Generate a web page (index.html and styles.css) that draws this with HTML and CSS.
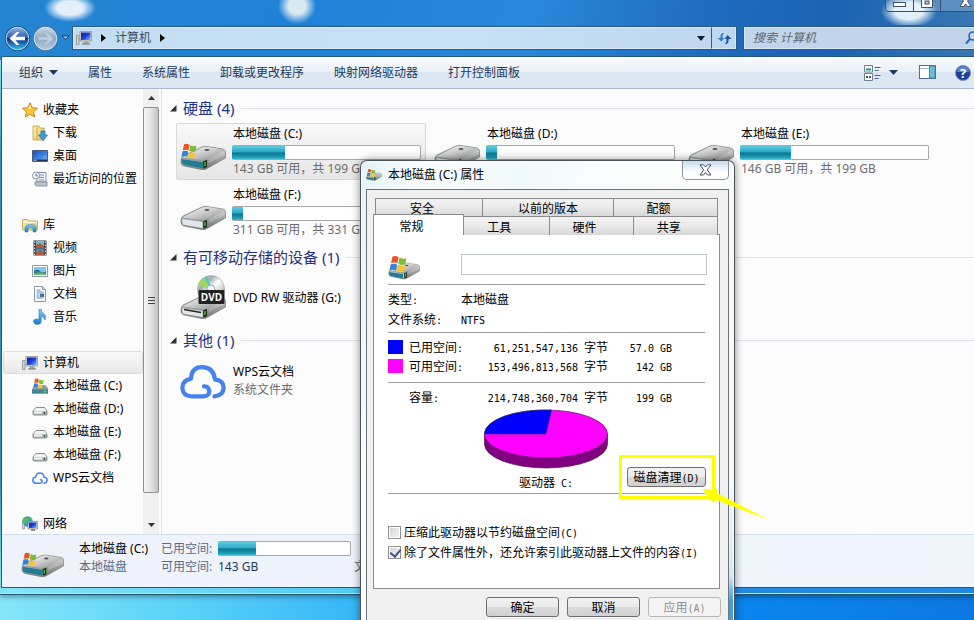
FILE: index.html
```html
<!DOCTYPE html>
<html lang="zh-CN">
<head>
<meta charset="utf-8">
<title>计算机</title>
<link rel="stylesheet" href="styles.css">
</head>
<body>
<svg class="defs" aria-hidden="true">
  <defs>
    <linearGradient id="metal" x1="0" y1="0" x2="1" y2="1"><stop offset="0" stop-color="#fafafa"/><stop offset=".5" stop-color="#c9caca"/><stop offset="1" stop-color="#858786"/></linearGradient>
    <linearGradient id="side" x1="0" y1="0" x2="0" y2="1"><stop offset="0" stop-color="#d8dada"/><stop offset="1" stop-color="#6c706e"/></linearGradient>
    <linearGradient id="screen" x1="0" y1="0" x2="1" y2="1"><stop offset="0" stop-color="#0c1fa8"/><stop offset=".5" stop-color="#1d3fd6"/><stop offset="1" stop-color="#7fb4f5"/></linearGradient>
    <linearGradient id="wallpaper" x1="0" y1="0" x2="1" y2="1"><stop offset="0" stop-color="#1c49b8"/><stop offset=".6" stop-color="#3f86e6"/><stop offset="1" stop-color="#8cc4f5"/></linearGradient>
    <linearGradient id="folder" x1="0" y1="0" x2="1" y2="1"><stop offset="0" stop-color="#fdf3b4"/><stop offset="1" stop-color="#e3bd58"/></linearGradient>
    <linearGradient id="aqua" x1="0" y1="0" x2="0" y2="1"><stop offset="0" stop-color="#7fd0f7"/><stop offset="1" stop-color="#1878c4"/></linearGradient>
    <linearGradient id="orb" x1="0" y1="0" x2="0" y2="1"><stop offset="0" stop-color="#8fb4e4"/><stop offset=".45" stop-color="#2c5fb8"/><stop offset=".5" stop-color="#0a3288"/><stop offset="1" stop-color="#2fc0f4"/></linearGradient>
    <linearGradient id="orbOff" x1="0" y1="0" x2="0" y2="1"><stop offset="0" stop-color="#c8d6e4"/><stop offset=".5" stop-color="#8fa9c3"/><stop offset="1" stop-color="#b3cbdf"/></linearGradient>
    <linearGradient id="disc" x1="0" y1="0" x2="1" y2="1"><stop offset="0" stop-color="#efefef"/><stop offset=".3" stop-color="#a9acae"/><stop offset=".5" stop-color="#fff"/><stop offset="1" stop-color="#8b8e90"/></linearGradient>
  </defs>
  <symbol id="flag" viewBox="0 0 16 16">
    <path d="M3 1.500Q6 0 8.500 2L7.500 7.300Q5 6 1.800 7.300Z" fill="#e8542a"/><path d="M9.300 2.300Q12 4 15.500 2.800L14.500 8.200Q11.500 9.500 8.300 7.800Z" fill="#7fbd32"/>
    <path d="M1.500 8.300Q4.500 7 7.200 8.500L6.200 13.700Q3.500 12.500 .400 13.700Z" fill="#2f86dc"/><path d="M8 9Q11 10.600 14.300 9.300L13.200 14.700Q10 16 7 14.200Z" fill="#f8c52c"/>
  </symbol>
  <symbol id="drive" viewBox="0 0 46 26">
    <path d="M1 15Q1 12 4 10.500L22 2Q24 1 27 1.500L43 4Q46 5 45.500 8V13L27 23.500Q25 25 22 24.500L4 21Q1 20 1 17Z" fill="url(#side)" stroke="#777" stroke-width=".7"/>
    <path d="M2 12.500L23 2.500Q25 1.600 28 2L44 5L26 14.500Q24 15.500 21 15Z" fill="url(#metal)"/>
    <path d="M2 13.500L23 16.500V23.500L4 20.300Q2 19.800 2 18Z" fill="#e3e6ea" stroke="#8b8f93" stroke-width=".7"/>
    <path d="M23 16.500L27 14.800V22L23.500 23.500Z" fill="#1d2a1c"/><path d="M25 17v4" stroke="#61d43b" stroke-width="1.300"/><ellipse cx="27" cy="5" rx="2.500" ry="1" fill="#555"/>
    <path d="M29 15L45 6.500M29 17L45 9" stroke="#fff" stroke-width=".6" opacity=".6"/>
  </symbol>
  <symbol id="sysdrive" viewBox="0 0 46 28">
    <use href="#drive" x="0" y="2" width="46" height="26"/><path d="M2 16L23 19V25.500L4 22Q2 21 2 19Z" fill="#257b91"/><use href="#flag" x="1" y="0" width="16" height="16"/>
  </symbol>
  <symbol id="volume" viewBox="0 0 32 26">
    <use href="#drive" x="0" y="7" width="32" height="18"/><path d="M1 17L15 19V23.500L3 21Q1 20 1 19Z" fill="#257b91"/><use href="#flag" x="1" y="0" width="18" height="18"/>
  </symbol>
  <symbol id="minidrive" viewBox="0 0 16 16">
    <path d="M1 10L4 6.500H12.500L15 10V13Q15 14 14 14H2Q1 14 1 13Z" fill="#b9bcbd" stroke="#737878" stroke-width=".8"/><path d="M4 7H12.500L14.500 10H1.500Z" fill="#f1f2f2"/><path d="M2 11.500h8" stroke="#f5f5f5" stroke-width="2"/><path d="M12.500 11v2" stroke="#2c5f25" stroke-width="1.500"/>
  </symbol>
  <symbol id="minisys" viewBox="0 0 16 16">
    <path d="M0 11L3 7H13L16 10V15.500H0Z" fill="#8c9ca4"/><path d="M0 11.500h16v4H0z" fill="#3f8497"/><path d="M12 12.500h2v2h-2z" fill="#77c92e"/><use href="#flag" x="1" y="0" width="11" height="11"/>
  </symbol>
  <symbol id="computer" viewBox="0 0 16 16">
    <path d="M4 1.500H15.500V11H4Z" fill="#d9d9d2" stroke="#8e8e88" stroke-width=".7"/><path d="M5 2.500H14.500V10H5Z" fill="url(#screen)"/><path d="M8 11h4l1 3H7Z" fill="#a7a79f"/><path d="M6 14h8" stroke="#77776f"/><path d="M.500 5.500h2.500V14.500H.500Z" fill="#d6d8d6" stroke="#7b7d7b" stroke-width=".7"/>
  </symbol>
  <symbol id="star" viewBox="0 0 16 16"><path d="M8 .800L10.200 5.700L15.500 6.200L11.500 9.700L12.700 15L8 12.200L3.300 15L4.500 9.700L.500 6.200L5.800 5.700Z" fill="#fbc63c" stroke="#d97f1d"/><path d="M8 3L9.300 6.500H6Z" fill="#fff3b0"/></symbol>
  <symbol id="download" viewBox="0 0 16 16"><path d="M1 1H7L8 3H12V15H1Z" fill="url(#folder)" stroke="#bf9b45" stroke-width=".8"/><path d="M5 2V15" stroke="#cfa851"/><path d="M9 6h4v4h2.500L11 15.500L6.500 10H9Z" fill="#3a9be6" stroke="#1668b4" stroke-width=".7"/></symbol>
  <symbol id="desktop" viewBox="0 0 16 16"><path d="M.500 2.500H15.500V13.500H.500Z" fill="url(#wallpaper)" stroke="#4a5a78"/><path d="M1 11.500H15V13H1Z" fill="#253858"/><path d="M1.500 12.200h3" stroke="#9fd7f2"/></symbol>
  <symbol id="recent" viewBox="0 0 16 16"><path d="M5 1.500H14V11H5Z" fill="#eef3f8" stroke="#8191a4"/><path d="M7 4h5M7 6.500h5M7 9h5" stroke="#7292b5"/><path d="M3 11H15V15H5Q3 15 3 13Z" fill="#b9c4cf" stroke="#7a8796" stroke-width=".8"/><circle cx="4" cy="4.500" r="3.500" fill="#f7f9fa" stroke="#8c98a5"/><path d="M4 2.500V4.800H6" stroke="#54718f" fill="none"/></symbol>
  <symbol id="library" viewBox="0 0 16 16"><path d="M.500 2.500H6L7 4H15.500V13H.500Z" fill="url(#folder)" stroke="#c59f48" stroke-width=".8"/><path d="M1 5.500H15" stroke="#fffbd8"/><path d="M3 15V11Q3 7.500 8.500 7.500T14 11V15H11V12Q11 10.500 8.500 10.500T6 12V15Z" fill="url(#aqua)" stroke="#3a87c0" stroke-width=".6"/></symbol>
  <symbol id="video" viewBox="0 0 16 16"><path d="M1.500 .500H14.500V15.500H1.500Z" fill="#343a40"/><path d="M4 1H12V7.500H4Z" fill="#70b9db"/><path d="M4 8.500H12V15H4Z" fill="#4f91b6"/><path d="M4 5L8 3L12 6V7.500H4ZM4 13L8 10L12 13V15H4Z" fill="#b85a3a"/><path d="M2.700 1.500V15M13.300 1.500V15" stroke="#fff" stroke-dasharray="1.500 1.500"/></symbol>
  <symbol id="picture" viewBox="0 0 16 16"><path d="M.500 2.500H15.500V13.500H.500Z" fill="#fff" stroke="#8c9aa5"/><path d="M2 4H14V12H2Z" fill="#79c9ee"/><path d="M2 8Q5 5 8 8T14 8V12H2Z" fill="#257894"/><path d="M2 10.500Q8 8.500 14 11V12H2Z" fill="#70b669"/></symbol>
  <symbol id="document" viewBox="0 0 16 16"><path d="M2.500 .500H10.500L13.500 3.500V15.500H2.500Z" fill="#fff" stroke="#8996a5"/><path d="M10.500 .500V3.500H13.500" fill="#dbe5ee" stroke="#8996a5"/><path d="M4.500 4h4M4.500 6h7M4.500 8h3M4.500 10h3M4.500 12h7" stroke="#6387ab"/><path d="M8 7.500h4v3.500H8z" fill="#3976ae"/></symbol>
  <symbol id="music" viewBox="0 0 16 16"><path d="M7 0H9Q9.500 3.500 12 5T13 11Q12.500 8 9.200 7V12Q9 15.500 5.500 15.500T1.500 12.800T5 10L7 10.500Z" fill="url(#aqua)" stroke="#1f7fc0" stroke-width=".6"/></symbol>
  <symbol id="cloud" viewBox="0 0 48 36"><path d="M36 33.500Q46 32 45.500 24Q45 16.500 36.500 16Q35 3 23 3Q12 3 11.500 15Q2 17 2.500 25Q3 33 12 33.500H25Q31 33 30.500 27.500Q29.500 22.500 25 23" fill="none" stroke="#4482ed" stroke-width="4.400" stroke-linecap="round" stroke-linejoin="round"/></symbol>
  <symbol id="network" viewBox="0 0 16 16"><circle cx="5.500" cy="5.500" r="5.300" fill="#2c9bdb"/><path d="M1 3Q4 1 6 2T5 6T3 9Q0 7 1 3ZM7 1Q10 2 10.500 5L8 4Z" fill="#58bd4e"/><path d="M6 5.500H15.500V13H6Z" fill="#ddd" stroke="#777" stroke-width=".6"/><path d="M7 6.500H14.500V12H7Z" fill="url(#screen)"/><path d="M9 13h4v2H9z" fill="#8e8e88"/><path d="M.500 7h2v6h-2z" fill="#ccc" stroke="#777" stroke-width=".5"/></symbol>
</svg>

<main class="window">
  <header class="titlebar">
    <div class="caption">
      <button class="cap" aria-label="最小化"><svg width="13" height="6"><rect x=".5" y=".5" width="12" height="4" fill="#fff" stroke="#454f5c"/></svg></button>
      <button class="cap" aria-label="最大化"><svg width="12" height="12"><path d="M.5 0V7.500H11.500V0" fill="#fff" stroke="#454f5c"/><rect x="4" y="1" width="4" height="3" fill="#b5cbe5" stroke="#454f5c"/></svg></button>
      <button class="cap cap-close" aria-label="关闭"><svg width="13" height="12"><path d="M1 -3L4.500 1L1 6.500H4.500L6.500 4L8.500 6.500H12L8.500 1L12 -3Z" fill="#fff" stroke="#454f5c"/></svg></button>
    </div>
  </header>
  <nav class="navbar">
    <button class="orb" aria-label="后退"><svg width="27" height="27" viewBox="0 0 27 27"><circle cx="13.500" cy="13.500" r="12.500" fill="#17457c"/><circle cx="13.500" cy="13.500" r="11.300" fill="url(#orb)" stroke="#c7dff5"/><path d="M5.500 13.500L12.500 7H15.500L11.500 11.800H21V15.200H11.500L15.500 20H12.500Z" fill="#fff"/></svg></button>
    <button class="orb" aria-label="前进"><svg width="27" height="27" viewBox="0 0 27 27"><circle cx="13.500" cy="13.500" r="12.500" fill="#4d6f92"/><circle cx="13.500" cy="13.500" r="11.300" fill="url(#orbOff)" stroke="#d5e7f5"/><path d="M21.500 13.500L14.500 7H11.500L15.500 11.800H6V15.200H15.500L11.500 20H14.500Z" fill="#bccfe0" stroke="#95aec5" stroke-width=".6"/></svg></button>
    <button class="history" aria-label="最近的页面"><svg width="9" height="6"><path d="M1 .8H8L4.500 4.500Z" fill="#8fc4ee" stroke="#123c68"/></svg></button>
    <div class="address">
      <svg class="i16"><use href="#computer"/></svg>
      <svg class="crumb-arrow" width="5" height="8"><path d="M0 0L5 4L0 8Z"/></svg>
      <a href="#" class="crumb">计算机</a>
      <svg class="crumb-arrow" width="5" height="8"><path d="M0 0L5 4L0 8Z"/></svg>
      <button class="addr-drop" aria-label="以前的位置"><svg width="8" height="5"><path d="M0 0H8L4 5Z" fill="#0b1c38"/></svg></button>
      <button class="refresh" aria-label="刷新"><svg width="15" height="13" viewBox="0 0 15 13"><path d="M5.500 1Q3 2 3.500 6H.5L4.500 9.500L7.500 6H5.500Q5 3 7 1Z" fill="#2f7fc8"/><path d="M9.500 12Q12 11 11.500 7H14.500L10.500 3L7.500 7H9.500Q10 10 8 12Z" fill="#1b559c"/></svg></button>
    </div>
    <div class="search">
      <input type="text" aria-label="搜索 计算机" placeholder="搜索 计算机">
      <svg width="14" height="14" viewBox="0 0 14 14"><circle cx="8" cy="5" r="4" fill="none" stroke="#2868ad" stroke-width="1.600"/><path d="M5 8L1 12.500" stroke="#2868ad" stroke-width="2"/></svg>
    </div>
  </nav>

  <div class="client">
    <div class="toolbar">
      <button>组织<svg class="tri" width="9" height="5"><path d="M0 0H9L4.500 5Z"/></svg></button>
      <button>属性</button><button>系统属性</button><button>卸载或更改程序</button><button>映射网络驱动器</button><button>打开控制面板</button>
      <div class="tools">
        <button aria-label="更改视图"><svg width="17" height="16" viewBox="0 0 17 16"><path d="M.5 .5H8.500V7H.5ZM.5 8.500H8.500V15.500H.5Z" fill="#fff" stroke="#6f8290"/><path d="M2 4.500H7" stroke="#248c9b" stroke-width="2"/><path d="M2 12H7" stroke="#45503e" stroke-width="2" stroke-dasharray="2 1"/><path d="M10.500 2.500H16.500M10.500 5.500H14.500M10.500 10.500H16.500M10.500 13.500H14.500" stroke="#4c6280"/></svg></button>
        <button aria-label="更多选项"><svg class="tri" width="9" height="5"><path d="M0 0H9L4.500 5Z"/></svg></button>
        <button class="pane-btn" aria-label="预览窗格"><svg width="17" height="15"><rect x=".5" y=".5" width="16" height="13" fill="#fff" stroke="#4d6f91"/><path d="M1 3.500H10" stroke="#9db5cc"/><rect x="10.500" y="1" width="5.500" height="12" fill="#6ac0dc" stroke="#4d829f"/></svg></button>
        <button aria-label="帮助"><svg width="16" height="16"><circle cx="8" cy="8" r="7.500" fill="#1c3f9d" stroke="#8193b5"/><path d="M2 7a6 6 0 0 1 12 0Z" fill="#5a82cf"/><text x="8" y="13" text-anchor="middle" class="help-text">?</text></svg></button>
      </div>
    </div>

    <div class="body">
      <aside class="sidebar">
        <ul class="tree">
          <li><svg class="i16"><use href="#star"/></svg>收藏夹</li>
          <li class="sub"><svg class="i16"><use href="#download"/></svg>下载</li>
          <li class="sub"><svg class="i16"><use href="#desktop"/></svg>桌面</li>
          <li class="sub"><svg class="i16"><use href="#recent"/></svg>最近访问的位置</li>
        </ul>
        <ul class="tree">
          <li><svg class="i16"><use href="#library"/></svg>库</li>
          <li class="sub"><svg class="i16"><use href="#video"/></svg>视频</li>
          <li class="sub"><svg class="i16"><use href="#picture"/></svg>图片</li>
          <li class="sub"><svg class="i16"><use href="#document"/></svg>文档</li>
          <li class="sub"><svg class="i16"><use href="#music"/></svg>音乐</li>
        </ul>
        <ul class="tree">
          <li class="current"><svg class="i16"><use href="#computer"/></svg>计算机</li>
          <li class="sub"><svg class="i16"><use href="#minisys"/></svg>本地磁盘 (C:)</li>
          <li class="sub"><svg class="i16"><use href="#minidrive"/></svg>本地磁盘 (D:)</li>
          <li class="sub"><svg class="i16"><use href="#minidrive"/></svg>本地磁盘 (E:)</li>
          <li class="sub"><svg class="i16"><use href="#minidrive"/></svg>本地磁盘 (F:)</li>
          <li class="sub"><svg class="i16"><use href="#cloud"/></svg>WPS云文档</li>
        </ul>
        <ul class="tree">
          <li><svg class="i16"><use href="#network"/></svg>网络</li>
        </ul>
      </aside>
      <div class="scroll">
        <button aria-label="向上滚动"><svg width="7" height="4"><path d="M0 4L3.500 0L7 4Z" fill="#333"/></svg></button>
        <div class="thumb"><i></i><i></i><i></i></div>
        <button class="down" aria-label="向下滚动"><svg width="7" height="4"><path d="M0 0L3.500 4L7 0Z" fill="#333"/></svg></button>
      </div>

      <section class="files">
        <h2><svg width="7" height="7"><path d="M6.500 0V6.500H0Z"/></svg>硬盘 (4)</h2>
        <div class="tiles">
          <article class="tile selected"><svg class="big"><use href="#sysdrive"/></svg><div><h3>本地磁盘 (C:)</h3><div class="bar"><span style="width:28%"></span></div><p>143 GB 可用，共 199 GB</p></div></article>
          <article class="tile"><svg class="big"><use href="#drive"/></svg><div><h3>本地磁盘 (D:)</h3><div class="bar"><span style="width:6%"></span></div></div></article>
          <article class="tile"><svg class="big"><use href="#drive"/></svg><div><h3>本地磁盘 (E:)</h3><div class="bar"><span style="width:27%"></span></div><p>146 GB 可用，共 199 GB</p></div></article>
          <article class="tile"><svg class="big"><use href="#drive"/></svg><div><h3>本地磁盘 (F:)</h3><div class="bar"><span style="width:6%"></span></div><p>311 GB 可用，共 331 GB</p></div></article>
        </div>
        <h2><svg width="7" height="7"><path d="M6.500 0V6.500H0Z"/></svg>有可移动存储的设备 (1)</h2>
        <div class="tiles">
          <article class="tile short">
            <svg class="big tall" viewBox="0 0 46 46">
              <circle cx="31" cy="14" r="13.500" fill="url(#disc)" stroke="#999" stroke-width=".6"/><path d="M31 14L18 10Q20 4 24 3Z" fill="#9ed85d"/><path d="M31 14L24 3L28 1Z" fill="#5ec3ca"/><circle cx="31" cy="14" r="4" fill="#f5f5f5" stroke="#aaa"/>
              <use href="#drive" x="0" y="19" width="46" height="26"/><path d="M4 34.500L21 37.500" stroke="#222" stroke-width="1.500"/>
              <rect x="18.500" y="15" width="26" height="14" rx="1" fill="#202224"/><text x="31.500" y="26" text-anchor="middle" class="dvd-text">DVD</text>
            </svg>
            <div><h3>DVD RW 驱动器 (G:)</h3></div></article>
        </div>
        <h2><svg width="7" height="7"><path d="M6.500 0V6.500H0Z"/></svg>其他 (1)</h2>
        <div class="tiles">
          <article class="tile short"><svg class="big cloud"><use href="#cloud"/></svg><div><h3>WPS云文档</h3><p>系统文件夹</p></div></article>
        </div>
      </section>
    </div>

    <footer class="details">
      <svg class="big"><use href="#sysdrive"/></svg>
      <div class="name"><strong>本地磁盘 (C:)</strong><span>本地磁盘</span></div>
      <dl>
        <dt>已用空间:</dt><dd><div class="bar"><span style="width:29%"></span></div></dd>
        <dt>可用空间:</dt><dd>143 GB</dd>
      </dl>
      <span class="more">文件系统:</span>
    </footer>
  </div>
</main>

<section class="dialog" role="dialog" aria-labelledby="dialog-title">
  <header>
    <svg class="i16"><use href="#volume"/></svg>
    <h1 id="dialog-title">本地磁盘 (C:) 属性</h1>
    <button class="close" aria-label="关闭"><svg width="13" height="12"><path d="M1 .8H4.500L6.500 3L8.500 .8H12L8.300 5.800L12 11H8.500L6.500 8.500L4.500 11H1L4.700 5.800Z" fill="#fff" stroke="#4a4f57"/></svg></button>
  </header>
  <div class="sheet">
    <div class="tabs back"><button>安全</button><button>以前的版本</button><button>配额</button></div>
    <div class="tabs front"><button class="active">常规</button><button>工具</button><button>硬件</button><button>共享</button></div>
    <div class="page">
      <div class="label-row"><svg class="dlg-icon"><use href="#volume"/></svg><input type="text" aria-label="卷标"></div>
      <hr>
      <dl class="facts"><dt>类型<b>:</b></dt><dd>本地磁盘</dd><dt>文件系统<b>:</b></dt><dd><b>NTFS</b></dd></dl>
      <hr>
      <table class="space">
        <tr><td class="sw"><i class="used"></i></td><th>已用空间<b>:</b></th><td><b>61,251,547,136 </b>字节</td><td class="gb"><b>57.0 GB</b></td></tr>
        <tr><td class="sw"><i class="free"></i></td><th>可用空间<b>:</b></th><td><b>153,496,813,568 </b>字节</td><td class="gb"><b>142 GB</b></td></tr>
      </table>
      <hr>
      <table class="space total">
        <tr><td class="sw"></td><th>容量<b>:</b></th><td><b>214,748,360,704 </b>字节</td><td class="gb"><b>199 GB</b></td></tr>
      </table>
      <div class="chart">
        <figure>
          <svg width="124" height="60" viewBox="0 0 124 60" role="img" aria-label="已用空间与可用空间">
            <path d="M.5 25V35A61.500 24 0 0 0 123.500 35V25Z" fill="#800080" stroke="#4d1a4d" stroke-width=".7"/>
            <ellipse cx="62" cy="25" rx="61.500" ry="24" fill="#f0f" stroke="#59205a" stroke-width=".7"/>
            <path d="M62 25H.5A61.500 24 0 0 1 67.500 1Z" fill="#00f" stroke="#33335c" stroke-width=".7"/>
          </svg>
          <figcaption>驱动器<b> C:</b></figcaption>
        </figure>
        <div class="mark">
          <button class="btn">磁盘清理<b>(D)</b></button>
          <svg class="arrow" width="68" height="34" viewBox="0 0 68 34"><path d="M0 0L16 1L15 4L67 31L14 11L11 14Z" fill="#ff0"/></svg>
        </div>
      </div>
      <hr class="last">
      <div class="checks">
        <label><input type="checkbox"><span>压缩此驱动器以节约磁盘空间<b>(C)</b></span></label>
        <label><input type="checkbox" checked><span>除了文件属性外，还允许索引此驱动器上文件的内容<b>(I)</b></span></label>
      </div>
    </div>
    <div class="actions"><button class="btn">确定</button><button class="btn">取消</button><button class="btn" disabled>应用<b>(A)</b></button></div>
  </div>
</section>
</body>
</html>
```
FILE: styles.css
```css
* { box-sizing: border-box; }

html { height: 100%; overflow: hidden; }

body {
  height: 100%;
  margin: 0;
  overflow: hidden;
  font: 12px/18px "Noto Sans", "Noto Sans CJK SC", sans-serif;
  color: #000;
  background: linear-gradient(90deg, #86e6f8 0, #5ad2f8 180px, #35b4f7 370px, #0a86ee 740px, #0a78e0 100%);
}

h1, h2, h3, p, ul, dl, dd, dt, figure { margin: 0; padding: 0; font-weight: normal; }
ul { list-style: none; }
button { font: inherit; color: inherit; padding: 0; border: 0; background: none; }
svg { display: block; flex: none; }
.defs { position: absolute; width: 0; height: 0; }
.i16 { width: 16px; height: 16px; }
.dvd-text { font: bold 10px "Open Sans", sans-serif; fill: #fff; }
.help-text { font: bold 13px "Open Sans", sans-serif; fill: #fff; }

/* Explorer window */
.window {
  display: flex;
  flex-direction: column;
  height: calc(100% - 25px);
  padding: 0 0 6px 1px;
  border-bottom: 1px solid #24566f;
  box-shadow: inset 0 -1px #b5e6f7, 0 2px 5px #0005;
  background:
    linear-gradient(transparent 60px, #2e8fb4 160px, #2b8fae 480px, #7fe0f2 580px) left / 3px 100% no-repeat,
    linear-gradient(100deg, #2585d2 0, #1f82d6 30%, #2a86d8 55%, #1f6cc0 72%, #1c62b2 85%, #3a78b4 100%) top / 100% 60px no-repeat,
    linear-gradient(90deg, #83e5f6, #4fc6f4 40%, #2189e4 76%);
}

.titlebar {
  height: 25px;
  background:
    radial-gradient(ellipse 26px 14px at 69px 8px, #e4eff9 50%, transparent),
    radial-gradient(ellipse 19px 18px at 296px 6px, #d9eaf3 45%, transparent),
    radial-gradient(ellipse 28px 17px at 908px 11px, #e0effa 50%, transparent);
}
.caption { display: flex; width: 106px; margin-left: auto; margin-right: -17px; border: 1px solid #36506f; border-top: 0; border-radius: 0 0 4px 4px; }
.cap { display: flex; justify-content: center; width: 28px; height: 11px; padding-top: 2px; border-right: 1px solid #36506f; background: #ffffff33; }
.cap:nth-child(2) { padding-top: 0; }
.cap-close { width: 49px; padding-top: 0; }

.navbar { display: flex; align-items: center; height: 26px; padding-left: 3px; }
.orb { margin-right: 1px; }
.history { margin-right: 1px; padding: 2px 1px; }
.address, .search {
  display: flex;
  align-items: center;
  height: 24px;
  border: 1px solid #2c5a86;
  outline: 1px solid #ffffff66;
  outline-offset: -2px;
  background: linear-gradient(90deg, #c3def2, #c8e0f3 60%, #bfd6ef);
}
.address { flex: 1; padding-left: 3px; }
.crumb-arrow { margin: 0 9px; }
.crumb { color: #3d4d5e; text-decoration: none; }
.addr-drop { margin-left: auto; padding: 8px 6px; }
.refresh { display: flex; align-items: center; justify-content: center; width: 25px; height: 22px; border-left: 1px solid #3c5f86; }
.search { width: 238px; margin-left: 6px; margin-right: -7px; padding-left: 9px; background: #c1d4ea; }
.search input { flex: 1; min-width: 0; padding: 0; border: 0; outline: 0; font: italic 12px/18px "Noto Sans", "Noto Sans CJK SC", sans-serif; background: none; }
.search input::placeholder { color: #5c6670; opacity: 1; }
.search svg { margin-right: 1px; }

.client {
  display: flex;
  flex: 1;
  flex-direction: column;
  min-height: 0;
  margin-top: 5px;
  border: 1px solid #275784;
  border-right: 0;
  background: #fcfcfc;
}
.toolbar {
  display: flex;
  align-items: center;
  gap: 30px;
  height: 32px;
  padding: 0 3px 0 17px;
  color: #1e395b;
  border-bottom: 1px solid #a9b9ce;
  background: linear-gradient(#fafcfe 0, #e9f0f9 48%, #dce6f3 50%, #dfe8f5 100%);
}
.toolbar button { display: flex; align-items: center; }
.tri { margin-left: 6px; fill: #1e395b; }
.tools { display: flex; align-items: center; margin-left: auto; }
.tools .tri { margin-left: 8px; }
.pane-btn { margin: 0 19px 0 21px; }

.body { display: flex; flex: 1; min-height: 0; overflow: hidden; }
.sidebar { display: flex; flex-direction: column; gap: 23px; width: 141px; padding: 9px 0 0 1px; }
.tree li { display: flex; align-items: center; gap: 5px; height: 23px; padding-left: 18px; border: 1px solid transparent; white-space: nowrap; }
.tree .sub { padding-left: 28px; }
.tree .current { border-color: #dcdcdc; border-radius: 3px; background: linear-gradient(#fafafa, #e8e8e8); }

.scroll { display: flex; flex-direction: column; width: 16px; background: #f0f0f0; }
.scroll button { display: flex; align-items: center; justify-content: center; height: 18px; }
.scroll .down { margin-top: auto; }
.thumb {
  display: flex;
  flex: 1;
  flex-direction: column;
  align-items: center;
  justify-content: center;
  gap: 2px;
  margin-bottom: 23px;
  border: 1px solid #8f8f8f;
  border-radius: 2px;
  background: linear-gradient(90deg, #f5f5f5, #e6e6e6 45%, #c2c2c2);
}
.thumb i { width: 7px; height: 1px; background: #444; }

.files { flex: 1; margin-left: 2px; padding: 7px 0 0 8px; border-left: 1px solid #d5e2ee; }
.files h2 { display: flex; align-items: center; gap: 6px; height: 24px; margin-bottom: 3px; font-size: 15px; color: #1e3287; white-space: nowrap; }
.files h2 svg { fill: #303030; }
.files h2::after { content: ""; flex: 1; height: 1px; margin-left: 1px; background: #e0e2e6; }
.tiles { display: flex; flex-wrap: wrap; gap: 4px; margin: 0 -40px 4px 6px; }
.tile { display: flex; align-items: center; gap: 6px; width: 250px; height: 57px; padding-left: 3px; border: 1px solid transparent; white-space: nowrap; }
.tile.selected { border-color: #d9d9d9; border-radius: 2px; background: linear-gradient(#f8f8f8, #e6e6e6); }
.tile > div { align-self: stretch; width: 189px; padding-top: 1px; }
.tile h3 { font-size: 12px; padding-left: 1px; }
.tile p { padding-left: 1px; color: #6d6d6d; }
.tile.short { height: 52px; }
.tile.short > div { align-self: center; padding-top: 0; }
.big { width: 46px; height: 28px; margin-top: 10px; }
.tile .tall { height: 46px; margin-top: 0; }
.tile .cloud { height: 35px; margin-top: 0; }
.bar { height: 15px; margin-top: 2px; border: 1px solid #a8a8a8; border-left: 0; border-radius: 2px; background: #fff; }
.bar span { display: block; height: 100%; background: linear-gradient(#5fcbe0 0, #27a5c5 48%, #08768f 52%, #1f99b2 85%, #36bbd0); }

.details { display: flex; align-items: center; height: 53px; padding: 0 0 6px 19px; border-top: 1px solid #d4dfee; background: linear-gradient(90deg, #eef3fb, #f1f5fc); white-space: nowrap; }
.details .big { width: 43px; margin: 14px 15px 0 0; }
.name { width: 82px; }
.name strong, .name span { display: block; font-weight: normal; }
.name span, .details dt, .more { color: #5a6a85; }
.details dl { display: grid; grid-template-columns: 57px 133px; }
.details dd { color: #1e395b; }
.details .bar { margin-top: 1px; }
.more { align-self: flex-end; margin: 0 0 5px 3px; }

/* Properties dialog */
.dialog {
  position: absolute;
  left: 360px;
  top: 160px;
  display: flex;
  flex-direction: column;
  width: 375px;
  padding: 0 5px 6px 5px;
  border: 1px solid #4a5258;
  border-bottom: 0;
  border-radius: 7px 7px 0 0;
  box-shadow: 0 0 8px #0007, inset 0 0 0 1px #fff;
  font-family: "Noto Sans CJK SC", sans-serif;
  background:
    linear-gradient(#f8fafa 0, #f8fafa 310px, #e5f3fa 370px, #cfeaf8 415px, #3f9be4 440px) right 1px top 0 / 5px 100% no-repeat,
    linear-gradient(100deg, #e3f4f8 0, #fafdfe 60px, #f0f9fb 160px, #fbfdfd 260px, #fafcfc);
}
.dialog header { display: flex; align-items: center; height: 28px; }
.dialog h1 { margin-left: 6px; font: 12px/18px "Noto Sans", "Noto Sans CJK SC", sans-serif; }
.close { display: flex; align-items: center; justify-content: center; align-self: flex-start; width: 47px; height: 19px; margin-left: auto; border: 1px solid #8c949c; border-top: 0; border-radius: 0 0 5px 5px; background: linear-gradient(#c3dcee, #fff 60%); }
.dialog b { font: 10px/10px "DejaVu Sans Mono", monospace; white-space: pre; }
.sheet { padding: 8px 8px 12px 6px; border: 1px solid #707477; background: #f0f0f0; }
.tabs { display: grid; }
.tabs button { height: 18px; padding-right: 14px; line-height: 17px; border: 1px solid #8b8b8b; border-bottom: 0; border-right: 0; background: linear-gradient(#f3f3f3, #e9e9e9 50%, #d8d8d8); }
.tabs button:last-child { border-right: 1px solid #8b8b8b; }
.back { grid-template-columns: 107fr 131fr 105fr; margin: 0 2px; }
.back button:nth-child(2) { padding-right: 0; }
.front { grid-template-columns: 91px repeat(3, 1fr); margin-right: 2px; }
.front button { height: 19px; }
.tabs .active { position: relative; height: 21px; margin: -2px 0 -1px; border-right: 1px solid #8b8b8b; background: #fff; }
.tabs .active + button { border-left: 0; }

.page { margin-top: -1px; padding: 19px 14px 27px; border: 1px solid #8b8b8b; background: #fff; }
.label-row { display: flex; align-items: flex-start; justify-content: space-between; }
.dlg-icon { width: 32px; height: 26px; margin-top: 1px; }
.label-row input { width: 246px; height: 21px; margin-right: -2px; border: 1px solid #c3c6c9; background: #fff; }
.page hr { height: 1px; margin: 3px 0 4px; border: 0; background: #a0a0a0; }
.facts { display: grid; grid-template-columns: 73px 1fr; line-height: 20px; }
.space { border-collapse: collapse; line-height: 18px; }
.space td, .space th { height: 19px; padding: 0; font-weight: normal; text-align: left; }
.space .sw { width: 21px; }
.space th { width: 65px; }
.space td:nth-child(3) { width: 134px; text-align: right; }
.space .gb { width: 64px; text-align: right; }
.sw i { display: block; width: 15px; height: 14px; }
.used { background: #00f; }
.free { background: #f0f; }
.space + hr { margin-top: 7px; }
.chart { display: flex; justify-content: space-between; margin-top: 3px; margin-right: -10px; padding-left: 96px; }
figcaption { height: 24px; line-height: 26px; text-align: center; }
.mark { position: relative; align-self: flex-end; z-index: 1; height: 44px; margin-bottom: -6px; padding: 9px 6px 0 5px; border: 3px solid #ff0; }
.mark .btn { display: block; width: 79px; }
.arrow { position: absolute; left: 80px; top: 31px; }
.btn { height: 20px; line-height: 18px; border: 1px solid #707070; border-radius: 3px; background: linear-gradient(#f3f3f3, #ebebeb 48%, #dcdcdc 52%, #cfcfcf); white-space: nowrap; }
.page .last { margin: 0; }
.checks { display: flex; flex-direction: column; gap: 2px; padding-top: 29px; }
.checks label { display: flex; align-items: center; gap: 3px; line-height: 18px; white-space: nowrap; }
.checks input { flex: none; width: 13px; height: 13px; margin: 0; appearance: none; border: 1px solid #8e8f8f; box-shadow: inset 0 0 0 1px #fff; background: linear-gradient(135deg, #cfd3d6, #f6f6f6); }
.checks input:checked::after { content: ""; display: block; width: 5px; height: 8px; margin: 0 0 0 3px; border: solid #3a4f9c; border-width: 0 2px 2px 0; rotate: 40deg; }
.actions { display: flex; justify-content: flex-end; gap: 8px; padding-top: 8px; margin-right: -1px; }
.actions .btn { width: 73px; }
.btn:disabled { color: #8f8f8f; border-color: #b8b8b8; background: #f4f4f4; }
```
